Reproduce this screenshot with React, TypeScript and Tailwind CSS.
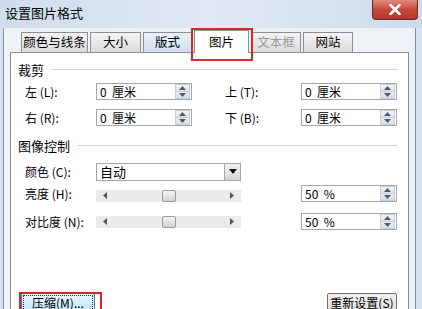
import React from "react";

const font = { fontFamily: '"Noto Sans CJK SC", "Liberation Sans", sans-serif' };

function Spinner() {
  return (
    <div className="flex flex-col w-[15px] h-[15px] mr-[1px] border border-[#c9cfd8]">
      <div className="flex-1 flex items-center justify-center bg-gradient-to-b from-[#f4f6f9] to-[#dde3ea] border-b border-[#c9cfd8]">
        <svg width="7" height="4" viewBox="0 0 7 4"><path d="M0 4 L3.5 0 L7 4Z" fill="#4d5a6a" /></svg>
      </div>
      <div className="flex-1 flex items-center justify-center bg-gradient-to-b from-[#e8ecf1] to-[#d6dde6]">
        <svg width="7" height="4" viewBox="0 0 7 4"><path d="M0 0 L3.5 4 L7 0Z" fill="#4d5a6a" /></svg>
      </div>
    </div>
  );
}

function SpinInput({ value }: { value: string }) {
  return (
    <div className="w-[96px] h-[17px] border border-[#a6a6a6] bg-white flex items-center justify-between">
      <span className="pl-[3px] text-[12px] leading-none text-black whitespace-pre">{value}</span>
      <Spinner />
    </div>
  );
}

function Slider() {
  return (
    <div className="w-[145px] h-[12px] bg-[#ebebeb] flex items-center justify-between px-[7px] relative">
      <svg width="4" height="7" viewBox="0 0 4 7"><path d="M4 0 L0 3.5 L4 7Z" fill="#555" /></svg>
      <div className="absolute left-[66px] top-[0px] w-[14px] h-[12px] border border-[#9a9a9a] rounded-[2px] bg-gradient-to-b from-[#f6f6f6] to-[#d2d2d2]" />
      <svg width="4" height="7" viewBox="0 0 4 7"><path d="M0 0 L4 3.5 L0 7Z" fill="#555" /></svg>
    </div>
  );
}

function Tab({ label, w, selected, disabled, hover }: { label: string; w: number; selected?: boolean; disabled?: boolean; hover?: boolean }) {
  const base = "flex items-center justify-center border border-[#8c8e94] border-b-0 text-[12.5px] leading-none";
  if (selected) {
    return (
      <div className={`${base} h-[23px] bg-white -mb-[1px] relative z-10 text-black`} style={{ width: w }}>
        {label}
      </div>
    );
  }
  return (
    <div
      className={`${base} h-[20px] ${hover ? "bg-gradient-to-b from-[#eaf2fb] to-[#cfdff1]" : "bg-gradient-to-b from-[#f3f3f3] to-[#dcdcdc]"} ${disabled ? "text-[#9a9a9a]" : "text-black"}`}
      style={{ width: w }}
    >
      {label}
    </div>
  );
}

export default function App() {
  return (
    <div className="w-[422px] h-[309px] overflow-hidden bg-[#d4e1f0] relative flex flex-col" style={font}>
      {/* Title bar */}
      <div className="h-[28px] flex items-start justify-between shrink-0 bg-gradient-to-r from-[#cfdcec] via-[#e0eaf5] to-[#cddbeb]">
        <span className="pl-[5px] pt-[5px] text-[13px] leading-[16px] text-black">设置图片格式</span>
        <div className="mr-[4px] w-[46px] h-[20px] rounded-b-[4px] border border-t-0 border-[#6b2b25] bg-gradient-to-b from-[#e08a7e] via-[#c7473a] to-[#b23a2c] flex items-center justify-center">
          <svg width="12" height="11" viewBox="0 0 12 11">
            <path d="M1.5 1 L10.5 10 M10.5 1 L1.5 10" stroke="#fff" strokeWidth="2.6" strokeLinecap="round" />
          </svg>
        </div>
      </div>

      {/* Window client */}
      <div className="flex-1 ml-[3px] mr-[6px] border-l border-r border-[#7d8ea5] bg-[#eef2f7] flex flex-col pl-[6px] pr-[6px]">
        {/* Tabs */}
        <div className="flex items-end gap-[2px] pl-[11px] h-[24px] shrink-0">
          <Tab label="颜色与线条" w={67} />
          <Tab label="大小" w={51} />
          <Tab label="版式" w={49} hover />
          <Tab label="图片" w={55} selected />
          <Tab label="文本框" w={50} disabled />
          <Tab label="网站" w={50} />
        </div>

        {/* Panel */}
        <div className="flex-1 border border-[#8c8e94] bg-white flex flex-col pt-[8px] pl-[7px] pr-[10px] text-black">
          {/* 裁剪 */}
          <div className="flex items-center h-[16px]">
            <span className="text-[13px] leading-none">裁剪</span>
            <div className="flex-1 h-px bg-[#d5d5d5] ml-[7px]" />
          </div>
          <div className="flex items-center h-[17px] mt-[6px] text-[12px]">
            <span className="w-[78px] pl-[7px]">左 (L):</span>
            <SpinInput value="0  厘米" />
            <span className="w-[76px] ml-[33px]">上 (T):</span>
            <SpinInput value="0  厘米" />
          </div>
          <div className="flex items-center h-[17px] mt-[9px] text-[12px]">
            <span className="w-[78px] pl-[7px]">右 (R):</span>
            <SpinInput value="0  厘米" />
            <span className="w-[76px] ml-[33px]">下 (B):</span>
            <SpinInput value="0  厘米" />
          </div>

          {/* 图像控制 */}
          <div className="flex items-center h-[16px] mt-[11px]">
            <span className="text-[13px] leading-none">图像控制</span>
            <div className="flex-1 h-px bg-[#d5d5d5] ml-[8px]" />
          </div>
          <div className="flex items-center h-[17px] mt-[10px] text-[12px]">
            <span className="w-[78px] pl-[7px]">颜色 (C):</span>
            <div className="w-[145px] h-[18px] border border-[#a6a6a6] bg-white flex items-center justify-between">
              <span className="pl-[3px] text-[13px] leading-none">自动</span>
              <div className="w-[16px] h-[16px] border-l border-[#a6a6a6] bg-gradient-to-b from-[#f2f2f2] to-[#d4d4d4] flex items-center justify-center">
                <svg width="8" height="5" viewBox="0 0 8 5"><path d="M0 0 L8 0 L4 5Z" fill="#111" /></svg>
              </div>
            </div>
          </div>
          <div className="flex items-center h-[17px] mt-[5px] text-[12px]">
            <span className="w-[78px] pl-[7px]">亮度 (H):</span>
            <div className="pt-[4px]"><Slider /></div>
            <div className="ml-[60px]"><SpinInput value="50  %" /></div>
          </div>
          <div className="flex items-center h-[17px] mt-[11px] text-[12px]">
            <span className="w-[78px] pl-[7px] whitespace-nowrap">对比度 (N):</span>
            <Slider />
            <div className="ml-[60px]"><SpinInput value="50  %" /></div>
          </div>

          {/* Buttons */}
          <div className="flex items-start justify-between mt-[63px] pl-[3px] pr-[1px]">
            <div className="w-[74px] h-[20px] border border-[#3c7fb1] rounded-[2px] bg-gradient-to-b from-[#eaf6fd] to-[#bee6fd] p-[1px]">
              <div className="w-full h-full border border-dotted border-[#333] flex items-center justify-center text-[12px] leading-none">压缩(M)...</div>
            </div>
            <div className="w-[70px] h-[20px] border border-[#707070] rounded-[2px] bg-gradient-to-b from-[#f2f2f2] to-[#dcdcdc] flex items-center justify-center text-[12px] leading-none">
              重新设置(S)
            </div>
          </div>
        </div>
      </div>

      {/* Red highlight boxes */}
      <div className="absolute left-[191px] top-[28px] w-[62px] h-[33px] border-2 border-[#d8262c] pointer-events-none z-20" />
      <div className="absolute left-[19px] top-[292px] w-[83px] h-[22px] border-2 border-[#d8262c] pointer-events-none z-20" />
    </div>
  );
}
